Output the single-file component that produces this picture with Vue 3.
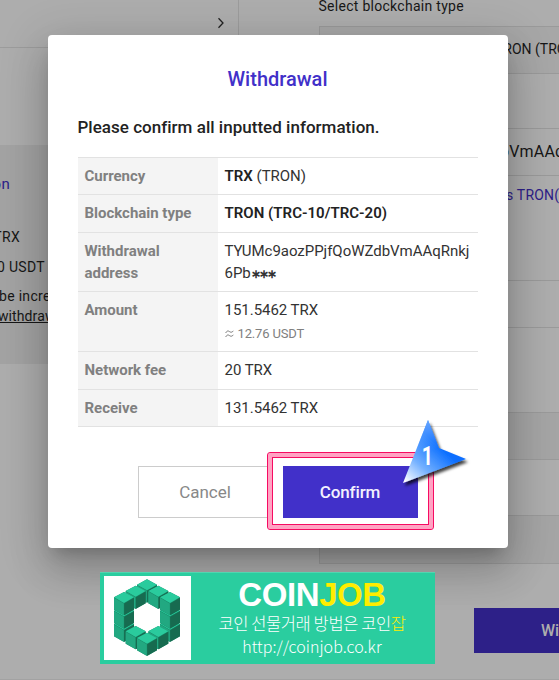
<script setup>
const rows = [
  { label: 'Currency', strong: 'TRX', text: ' (TRON)', cls: 'h37' },
  { label: 'Blockchain type', strong: 'TRON (TRC-10/TRC-20)', cls: 'h38' },
  { label: 'Withdrawal address', text: 'TYUMc9aozPPjfQoWZdbVmAAqRnkj6Pb', stars: 3, cls: 'h59' },
  { label: 'Amount', text: '151.5462 TRX', note: '12.76 USDT', cls: 'h60' },
  { label: 'Network fee', text: '20 TRX', cls: 'h38' },
  { label: 'Receive', text: '131.5462 TRX', cls: 'h37' }
]

// Apex of every cube, ordered from back to front
const cubes = [
  [141, 28], [107, 47], [175, 47],
  [72, 146], [210, 146], [72, 106], [210, 106], [72, 66], [210, 66],
  [107, 168], [175, 168], [141, 188]
]
</script>

<template>
  <div class="screen">
    <div class="page">
      <aside class="left">
        <div class="nav-row">
          <svg width="8" height="12" viewBox="0 0 8 12"><path d="M1.5 1.2 6 6 1.5 10.8" fill="none" stroke="#222" stroke-width="1.3" /></svg>
        </div>
        <div class="info">
          <p class="link">on</p>
          <p class="trx">TRX</p>
          <p class="usdt">0 USDT</p>
          <p class="inc">be increased</p>
          <p class="wd"><u>withdrawal</u></p>
        </div>
      </aside>
      <main class="right">
        <div class="caption">Select blockchain type</div>
        <div class="field select">TRON (TRC-10)</div>
        <div class="field address">bVmAAqRnkj</div>
        <div class="hint">s TRON(TRX)</div>
        <div class="field amount"></div>
        <div class="field fee"></div>
        <div class="gap"></div>
        <div class="field total"></div>
        <button class="submit">Withdrawal</button>
      </main>
    </div>

    <section class="modal">
      <h1>Withdrawal</h1>
      <h2>Please confirm all inputted information.</h2>
      <div class="table">
        <div v-for="r in rows" :key="r.label" class="row" :class="r.cls">
          <div class="label">{{ r.label }}</div>
          <div class="value">
            <b v-if="r.strong">{{ r.strong }}</b>{{ r.text }}<span v-if="r.stars" class="stars">{{ '∗'.repeat(r.stars) }}</span>
            <div v-if="r.note" class="note">
              <svg width="9" height="8" viewBox="0 0 9 8"><path d="M.7 3C2 .5 3.2.7 4.5 1.6S7.300 2.500 8.300 .8M.7 7C2 4.500 3.200 4.700 4.500 5.600S7.300 6.500 8.300 4.800" fill="none" stroke="#777" /></svg>
              {{ r.note }}
            </div>
          </div>
        </div>
      </div>
      <div class="actions">
        <button class="cancel">Cancel</button>
        <button class="confirm">Confirm</button>
      </div>
    </section>

    <div class="frame"><div class="frame-inner"></div></div>
    <svg class="arrow" width="80" height="80" viewBox="0 0 80 80">
      <defs>
        <linearGradient id="blue" gradientUnits="userSpaceOnUse" x1="10" y1="71" x2="44" y2="34">
          <stop offset="0" stop-color="#fff" />
          <stop offset=".45" stop-color="#74b1ff" />
          <stop offset="1" stop-color="#0a6eff" />
        </linearGradient>
        <linearGradient id="tip" gradientUnits="userSpaceOnUse" x1="33" y1="9" x2="40" y2="38">
          <stop offset="0" stop-color="#8ebeff" stop-opacity=".7" />
          <stop offset="1" stop-color="#8ebeff" stop-opacity="0" />
        </linearGradient>
        <filter id="drop" x="-20%" y="-20%" width="150%" height="150%"><feDropShadow dx="2" dy="3" stdDeviation="1.5" flood-color="#000" flood-opacity=".75" /></filter>
      </defs>
      <path filter="url(#drop)" fill="url(#blue)" d="M33 9 44 37 71 48 8 72Z" />
      <path fill="url(#tip)" d="M33 9 44 37 71 48 8 72Z" />
      <text transform="translate(32.300 53.500) scale(.75 1)" text-anchor="middle">1</text>
    </svg>

    <div class="banner">
      <div class="logo">
        <svg width="88" height="84" viewBox="12 18 264 252">
          <g v-for="(c, i) in cubes" :key="i" :transform="`translate(${c[0]} ${c[1]})`">
            <path d="M0 0 30 16V53L0 70-30 53V16Z" fill="#188a68" />
            <path d="M0 0 30 16 0 33-30 16Z" fill="#2acb9d" />
            <path d="M-30 17.500-.5 34.500V69.500L-30 52.500Z" fill="#22a881" />
            <path d="M30 17.500.5 34.500V69.500L30 52.500Z" fill="#176b50" />
          </g>
        </svg>
      </div>
      <div class="brand">
        <div class="name">COIN<span>JOB</span></div>
        <div class="tagline">코인 선물거래 방법은 코인<span>잡</span></div>
        <div class="url">http://coinjob.co.kr</div>
      </div>
    </div>
  </div>
</template>

<style>
body { margin: 0; }
</style>

<style scoped>
* { box-sizing: border-box; }
p, h1, h2 { margin: 0; }
button { font: inherit; padding: 0; border: 0; border-radius: 0; }
.screen { position: relative; width: 559px; height: 680px; overflow: hidden; background: #adadad; font-family: Roboto, "Liberation Sans", sans-serif; color: #171717; }
.page { display: flex; gap: 80px; height: 680px; border-bottom: 1px solid #a2a2a2; }
.left { width: 239px; flex: none; }
.nav-row { height: 48px; border-right: 1px solid #9c9c9c; border-bottom: 1px solid #9c9c9c; display: flex; justify-content: flex-end; padding: 17px 13px 0 0; }
.info { margin-top: 97px; height: 219px; padding-top: 29px; background: #a3a3a3; font-size: 14px; letter-spacing: .3px; overflow: hidden; }
.info p { height: 20px; line-height: 20px; white-space: nowrap; }
.info .link { width: 10px; display: flex; justify-content: flex-end; color: #2d2088; font-size: 15px; }
.info .trx { width: 20px; display: flex; justify-content: flex-end; margin-top: 33px; }
.info .usdt { margin: 10px 0 0 -3px; }
.info .inc { margin: 9px 0 0 -1px; }
.info .wd { margin-left: -2px; letter-spacing: .1px; }
.right { width: 245px; flex: none; }
.caption { height: 26px; line-height: 12px; font-size: 14px; letter-spacing: .28px; margin-left: -.5px; }
.field { border: 1px solid #9a9a9a; height: 48px; line-height: 45px; white-space: nowrap; }
.select { background: #a7a7a7; padding-left: 175px; font-size: 14px; }
.address { margin-top: 54px; padding-left: 180px; font-size: 16px; letter-spacing: .2px; }
.hint { height: 104px; padding: 9px 0 0 187px; line-height: 20px; font-size: 14px; letter-spacing: .2px; color: #2d2088; white-space: nowrap; }
.fee { margin-top: 84px; background: #a5a5a5; }
.gap { height: 55px; border-left: 1px solid #9a9a9a; }
.total { background: #a5a5a5; height: 49px; }
.submit { display: block; margin: 44px 0 0 155px; width: 200px; height: 45px; background: #2d2088; color: #adadad; font-size: 16px; font-weight: 500; text-align: left; padding-left: 67px; }

.modal { position: absolute; left: 48px; top: 35px; width: 460px; height: 513px; padding: 0 30px; border-radius: 4px; background: #fff; box-shadow: 0 11px 15px -7px rgba(0,0,0,.2), 0 24px 38px 3px rgba(0,0,0,.14), 0 9px 46px 8px rgba(0,0,0,.12); color: #222; }
h1 { padding-top: 32px; height: 80px; line-height: 24px; font-size: 20px; font-weight: 500; text-align: center; color: #4130c9; margin-left: -1px; }
h2 { height: 42px; line-height: 24px; font-size: 17px; font-weight: 500; letter-spacing: .02px; margin-left: -.5px; white-space: nowrap; }
.table { border-top: 1px solid #e2e2e2; font-size: 15px; line-height: 22px; }
.row { display: grid; grid-template-columns: 140px 260px; border-bottom: 1px solid #e2e2e2; }
.h37 { height: 37px; } .h38 { height: 38px; } .h59 { height: 59px; } .h60 { height: 60px; }
.label { background: #f4f4f4; color: #808080; font-weight: 700; padding: 7px 30px 0 6.5px; letter-spacing: -.02px; }
.row.h38 .label, .row.h37 .label { padding-right: 0; }
.value { padding: 7px 7px 0 6.5px; word-break: break-all; color: #333; letter-spacing: -.03px; }
.value b { font-weight: 600; color: #222; letter-spacing: .03px; }
.stars { letter-spacing: -1.8px; font-size: 12px; line-height: 1; font-weight: 700; }
.note { display: flex; align-items: center; gap: 4px; font-size: 13px; line-height: 26px; color: #808080; letter-spacing: -.15px; }
.actions { display: flex; gap: 10px; margin: 39px 0 0 60px; }
.actions button { width: 135px; height: 52px; font-size: 17px; padding-right: 1px; }
.cancel { background: #fff; border: 1px solid #ccc; color: #888; }
.actions .confirm { background: #4130c9; color: #f3f1ff; font-weight: 500; letter-spacing: -.1px; }

.frame { position: absolute; left: 267px; top: 452px; width: 167px; height: 78px; border: 1px solid #f60b62; border-radius: 3px; background: transparent; box-shadow: inset 0 0 0 4px #ffa3c3; }
.frame-inner { margin: 4px; height: 68px; border: 1px solid #f60b62; }
.arrow { position: absolute; left: 395px; top: 411px; }
.arrow text { font: 700 26px Roboto, sans-serif; fill: #fff; }

.banner { position: absolute; left: 100px; top: 572px; width: 335px; height: 92px; padding: 4px; display: flex; background: #2acd9f; border-top: 1px solid #51d5b0; color: #fff; }
.logo { width: 87px; height: 84px; margin-top: -1px; flex: none; background: #fff; overflow: hidden; }
.brand { flex: 1; text-align: center; white-space: nowrap; padding-left: 2px; margin-top: -1px; }
.name { height: 36px; font: 700 33px/37px "Liberation Sans", sans-serif; letter-spacing: -.4px; }
.name span, .tagline span { color: #ffed00; }
.tagline { font: 300 16.5px/22px "Noto Sans CJK KR", sans-serif; letter-spacing: -.4px; }
.url { font: 300 16px/24px "Noto Sans CJK KR", sans-serif; letter-spacing: .05px; }
</style>
